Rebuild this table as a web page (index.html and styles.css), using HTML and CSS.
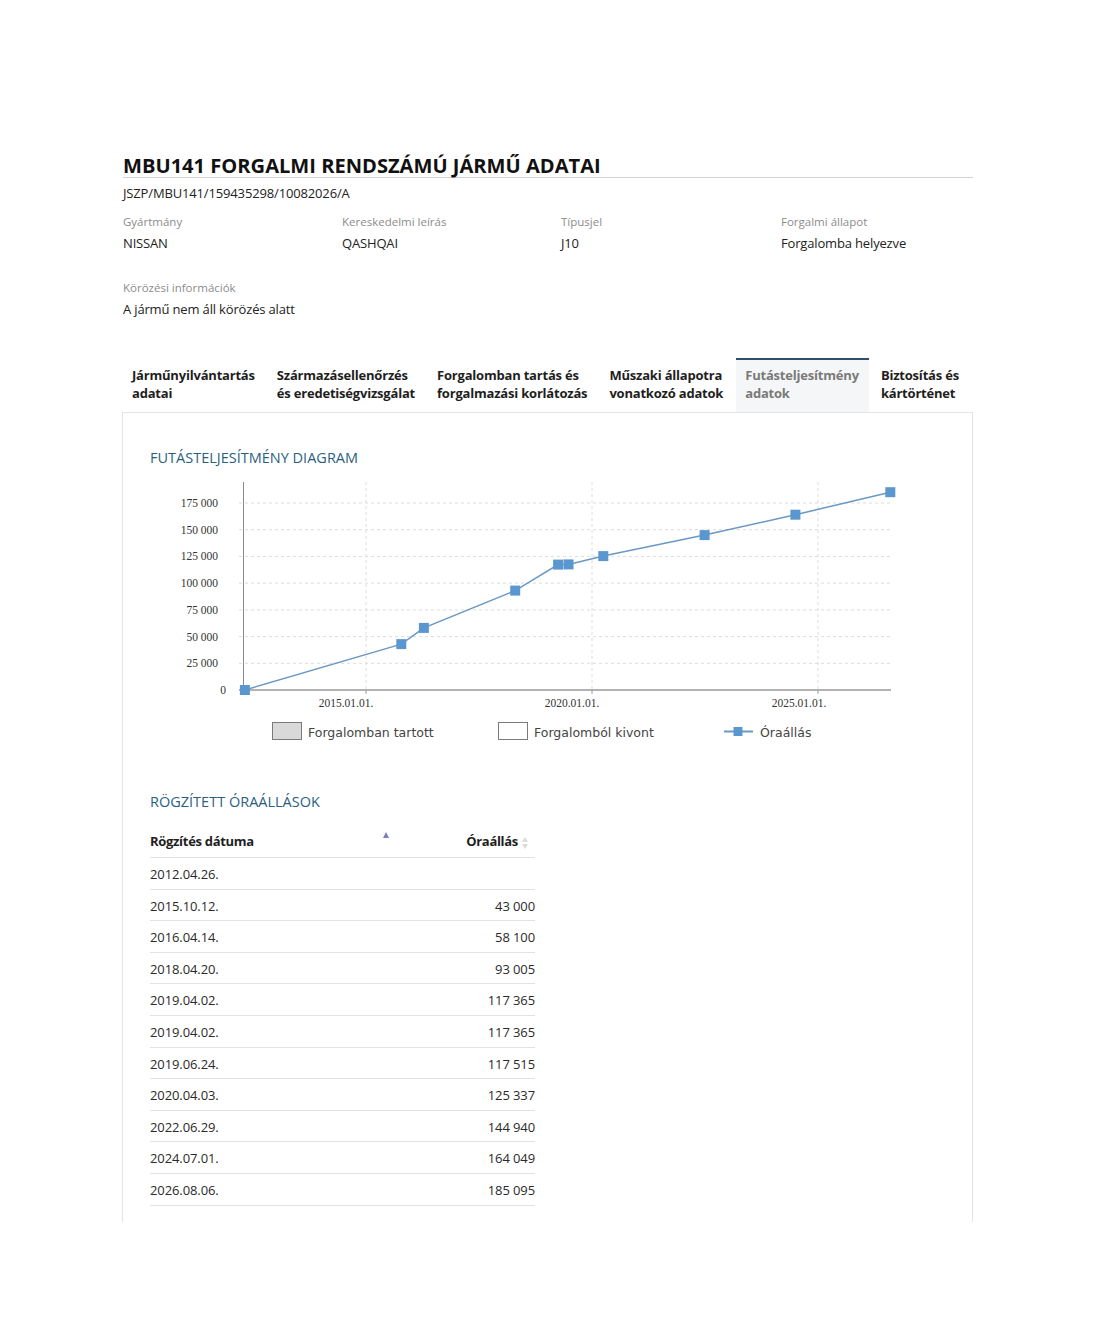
FILE: index.html
```html
<!DOCTYPE html>
<html lang="hu">
<head>
<meta charset="utf-8">
<title>MBU141 forgalmi rendszámú jármű adatai</title>
<link rel="stylesheet" href="styles.css">
</head>
<body>
<div class="page">
  <h1 class="title">MBU141 FORGALMI RENDSZÁMÚ JÁRMŰ ADATAI</h1>
  <div class="ref">JSZP/MBU141/159435298/10082026/A</div>

  <div class="facts">
    <div class="field"><div class="label">Gyártmány</div><div class="value">NISSAN</div></div>
    <div class="field"><div class="label">Kereskedelmi leírás</div><div class="value">QASHQAI</div></div>
    <div class="field"><div class="label">Típusjel</div><div class="value">J10</div></div>
    <div class="field"><div class="label">Forgalmi állapot</div><div class="value">Forgalomba helyezve</div></div>
  </div>

  <div class="field wanted"><div class="label">Körözési információk</div><div class="value">A jármű nem áll körözés alatt</div></div>

  <div class="tabs">
    <div class="tab">Járműnyilvántartás<br>adatai</div>
    <div class="tab">Származásellenőrzés<br>és eredetiségvizsgálat</div>
    <div class="tab">Forgalomban tartás és<br>forgalmazási korlátozás</div>
    <div class="tab">Műszaki állapotra<br>vonatkozó adatok</div>
    <div class="tab active">Futásteljesítmény<br>adatok</div>
    <div class="tab">Biztosítás és<br>kártörténet</div>
  </div>

  <div class="panel">
    <h2 class="section">FUTÁSTELJESÍTMÉNY DIAGRAM</h2>
    <svg class="chart" width="780" height="320" viewBox="0 0 780 320" xmlns="http://www.w3.org/2000/svg">
      <g transform="translate(-150,-472)">
        <g stroke="#dcdcdc" stroke-width="1" stroke-dasharray="3,3" fill="none">
          <line x1="239" y1="663.3" x2="890" y2="663.3"/>
          <line x1="239" y1="636.6" x2="890" y2="636.6"/>
          <line x1="239" y1="609.9" x2="890" y2="609.9"/>
          <line x1="239" y1="583.1" x2="890" y2="583.1"/>
          <line x1="239" y1="556.4" x2="890" y2="556.4"/>
          <line x1="239" y1="529.7" x2="890" y2="529.7"/>
          <line x1="239" y1="503" x2="890" y2="503"/>
          <line x1="366" y1="482" x2="366" y2="690"/>
          <line x1="592" y1="482" x2="592" y2="690"/>
          <line x1="818" y1="482" x2="818" y2="690"/>
        </g>
        <line x1="243.5" y1="482" x2="243.5" y2="690" stroke="#8a8a8a" stroke-width="1"/>
        <line x1="239" y1="690" x2="891" y2="690" stroke="#9a9a9a" stroke-width="1.5"/>
        <g stroke="#9a9a9a" stroke-width="1">
          <line x1="366" y1="690" x2="366" y2="694"/>
          <line x1="592" y1="690" x2="592" y2="694"/>
          <line x1="818" y1="690" x2="818" y2="694"/>
        </g>
        <g class="axis-y" text-anchor="end">
          <text x="218" y="507">175 000</text>
          <text x="218" y="533.7">150 000</text>
          <text x="218" y="560.4">125 000</text>
          <text x="218" y="587.1">100 000</text>
          <text x="218" y="613.9">75 000</text>
          <text x="218" y="640.6">50 000</text>
          <text x="218" y="667.3">25 000</text>
          <text x="226" y="694">0</text>
        </g>
        <g class="axis-x" text-anchor="middle">
          <text x="346" y="707">2015.01.01.</text>
          <text x="572" y="707">2020.01.01.</text>
          <text x="799" y="707">2025.01.01.</text>
        </g>
        <polyline fill="none" stroke="#6a98c4" stroke-width="1.5"
          points="244.9,690 401.3,644.1 423.9,627.9 515.2,590.6 558.1,564.6 568.5,564.4 603.3,556.1 704.6,535.1 795.4,514.7 890.3,492.2"/>
        <g fill="#5b97cf">
          <rect x="239.9" y="685" width="10" height="10"/>
          <rect x="396.3" y="639.1" width="10" height="10"/>
          <rect x="418.9" y="622.9" width="10" height="10"/>
          <rect x="510.2" y="585.6" width="10" height="10"/>
          <rect x="553.1" y="559.6" width="10" height="10"/>
          <rect x="563.5" y="559.4" width="10" height="10"/>
          <rect x="598.3" y="551.1" width="10" height="10"/>
          <rect x="699.6" y="530.1" width="10" height="10"/>
          <rect x="790.4" y="509.7" width="10" height="10"/>
          <rect x="885.3" y="487.2" width="10" height="10"/>
        </g>
        <g class="legend">
          <rect x="272.5" y="722.5" width="29" height="17" fill="#d9d9d9" stroke="#7a7a7a" stroke-width="1"/>
          <text x="308" y="736.5">Forgalomban tartott</text>
          <rect x="498.5" y="722.5" width="29" height="17" fill="#ffffff" stroke="#7a7a7a" stroke-width="1"/>
          <text x="534" y="736.5">Forgalomból kivont</text>
          <line x1="724" y1="731.5" x2="753" y2="731.5" stroke="#6a98c4" stroke-width="2"/>
          <rect x="733.5" y="727" width="9" height="9" fill="#5b97cf"/>
          <text x="760" y="736.5">Óraállás</text>
        </g>
      </g>
    </svg>

    <h2 class="section">RÖGZÍTETT ÓRAÁLLÁSOK</h2>
    <table class="readings">
      <thead>
        <tr>
          <th class="col-date">Rögzítés dátuma<span class="sort-up"></span></th>
          <th class="col-val">Óraállás<span class="sort-both"><span class="up"></span><span class="down"></span></span></th>
        </tr>
      </thead>
      <tbody>
        <tr><td>2012.04.26.</td><td class="num"></td></tr>
        <tr><td>2015.10.12.</td><td class="num">43 000</td></tr>
        <tr><td>2016.04.14.</td><td class="num">58 100</td></tr>
        <tr><td>2018.04.20.</td><td class="num">93 005</td></tr>
        <tr><td>2019.04.02.</td><td class="num">117 365</td></tr>
        <tr><td>2019.04.02.</td><td class="num">117 365</td></tr>
        <tr><td>2019.06.24.</td><td class="num">117 515</td></tr>
        <tr><td>2020.04.03.</td><td class="num">125 337</td></tr>
        <tr><td>2022.06.29.</td><td class="num">144 940</td></tr>
        <tr><td>2024.07.01.</td><td class="num">164 049</td></tr>
        <tr><td>2026.08.06.</td><td class="num">185 095</td></tr>
      </tbody>
    </table>
  </div>
</div>
</body>
</html>
```

FILE: styles.css
```css
* { box-sizing: border-box; }

html, body {
  margin: 0;
  padding: 0;
  background: #ffffff;
}

body {
  font-family: "Open Sans", "Liberation Sans", sans-serif;
  color: #222;
}

.page {
  width: 851px;
  margin-left: 122px;
  padding-top: 154px;
}

.title {
  margin: 0 0 0 1px;
  font-size: 20.1px;
  line-height: 23px;
  font-weight: 700;
  color: #111;
  border-bottom: 1px solid #d2d2d2;
}

.ref {
  margin: 6px 0 0 1px;
  font-size: 13px;
  line-height: 18px;
  letter-spacing: -0.15px;
  color: #222;
}

.facts {
  margin: 12px 0 0 1px;
  display: grid;
  grid-template-columns: 219px 219px 220px 1fr;
}

.field .label {
  font-size: 11.5px;
  line-height: 16px;
  color: #8c8c8c;
}

.field .value {
  margin-top: 4px;
  font-size: 13px;
  line-height: 18px;
  letter-spacing: -0.16px;
  color: #222;
}

.wanted {
  margin: 28px 0 0 1px;
}

.tabs {
  margin-top: 40px;
  margin-left: 1px;
  display: flex;
  gap: 3px;
}

.tab {
  padding: 6px 10px 10px 9px;
  border-top: 2px solid transparent;
  font-size: 13px;
  line-height: 18px;
  font-weight: 700;
  letter-spacing: -0.2px;
  color: #1e1e1e;
  white-space: nowrap;
}

.tab.active {
  background: #f5f6f7;
  border-top-color: #2e4f6a;
  color: #7a7a7a;
}

.panel {
  border: 1px solid #e4e4e4;
  border-bottom: none;
  padding: 35px 28px 16px 27px;
}

.section {
  margin: 0;
  font-size: 14.5px;
  line-height: 20px;
  font-weight: 400;
  color: #2b5f80;
}

.chart {
  display: block;
  margin-top: 4px;
}

.axis-y text, .axis-x text {
  font-family: "Liberation Serif", "Times New Roman", serif;
  font-size: 11.5px;
  fill: #333;
}

.legend text {
  font-family: "DejaVu Sans", "Liberation Sans", sans-serif;
  font-size: 12.5px;
  fill: #444;
}

.readings {
  margin-top: 11px;
  width: 385px;
  border-collapse: collapse;
  font-size: 13px;
}

.readings th {
  padding: 9px 0 7px;
  line-height: 18px;
  font-weight: 700;
  letter-spacing: -0.3px;
  text-align: left;
  color: #1e1e1e;
  border-bottom: 1px solid #e2e2e2;
}

.readings th.col-date {
  width: 243px;
  position: relative;
}

.readings th.col-val {
  text-align: right;
  padding-right: 17px;
  position: relative;
}

.sort-up {
  position: absolute;
  right: 4px;
  top: 9px;
  width: 0;
  height: 0;
  border-left: 3.5px solid transparent;
  border-right: 3.5px solid transparent;
  border-bottom: 6px solid #7d7fc0;
}

.sort-both {
  position: absolute;
  right: 6px;
  top: 14px;
  width: 7px;
  height: 14px;
}

.sort-both .up, .sort-both .down {
  position: absolute;
  left: 0;
  width: 0;
  height: 0;
  border-left: 3.5px solid transparent;
  border-right: 3.5px solid transparent;
}

.sort-both .up {
  top: 0;
  border-bottom: 5px solid #dcdcdc;
}

.sort-both .down {
  top: 7px;
  border-top: 5px solid #dcdcdc;
}

.readings td {
  padding: 7px 0 5.6px;
  line-height: 18px;
  letter-spacing: -0.1px;
  color: #2a2a2a;
  border-bottom: 1px solid #e2e2e2;
}

.readings td.num {
  text-align: right;
}
```
